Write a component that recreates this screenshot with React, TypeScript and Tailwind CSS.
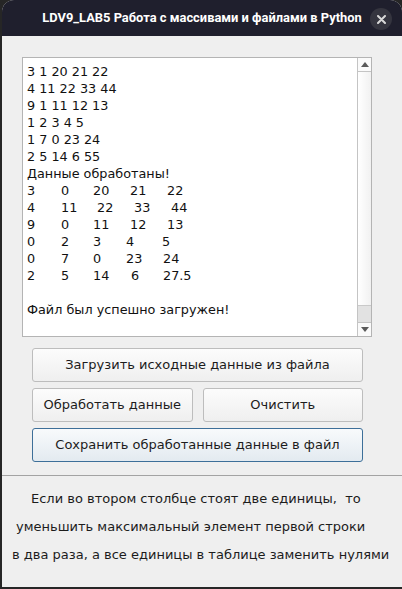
import React from "react";

// строки исходных данных
const rawLines = [
  "3 1 20 21 22",
  "4 11 22 33 44",
  "9 1 11 12 13",
  "1 2 3 4 5",
  "1 7 0 23 24",
  "2 5 14 6 55",
];

// обработанная таблица: [текст, смещение колонки]
const processed: [string, number][][] = [
  [["3", 0], ["0", 34], ["20", 66], ["21", 103], ["22", 140]],
  [["4", 0], ["11", 34], ["22", 70], ["33", 107], ["44", 144]],
  [["9", 0], ["0", 34], ["11", 66], ["12", 103], ["13", 140]],
  [["0", 0], ["2", 34], ["3", 66], ["4", 99], ["5", 135]],
  [["0", 0], ["7", 34], ["0", 66], ["23", 99], ["24", 136]],
  [["2", 0], ["5", 34], ["14", 66], ["6", 104], ["27.5", 136]],
];

const TableRow = ({ cells }: { cells: [string, number][] }) => {
  return (
    <div className="flex h-[17px]">
      {cells.map(([text, x], i) => {
        const next = cells[i + 1];
        const w = next ? next[1] - x : undefined;
        return (
          <span key={i} className="shrink-0" style={w ? { width: w } : undefined}>
            {text}
          </span>
        );
      })}
    </div>
  );
};

const Arrow = ({ up }: { up?: boolean }) => (
  <svg width="8" height="5" viewBox="0 0 8 5">
    {up ? (
      <path d="M0 5 L4 0 L8 5 Z" fill="#5a5a5a" />
    ) : (
      <path d="M0 0 L8 0 L4 5 Z" fill="#5a5a5a" />
    )}
  </svg>
);

const Btn = ({
  children,
  className,
  primary,
}: {
  children: React.ReactNode;
  className?: string;
  primary?: boolean;
}) => (
  <button
    className={
      "h-[34px] rounded-[3px] border text-[13px] text-[#1c1c1c] flex items-center justify-center " +
      (primary
        ? "border-[#3d6f99] bg-gradient-to-b from-[#f8fafc] to-[#e3eaf0] "
        : "border-[#bdbdbd] bg-gradient-to-b from-[#fcfcfc] to-[#efefef] ") +
      (className || "")
    }
  >
    {children}
  </button>
);

const App = () => {
  return (
    <div className="w-[402px] h-[589px] bg-[#262626] pl-[2px] pb-[2px] flex flex-col font-['DejaVu_Sans',sans-serif]">
      <div className="flex-1 flex flex-col rounded-t-[12px] overflow-hidden bg-[#efefef]">
        {/* заголовок окна */}
        <div className="relative h-[36px] shrink-0 bg-[#1f1f2d] flex items-center justify-center">
          <span className="font-['Roboto',sans-serif] font-bold text-[12.9px] text-white">
            LDV9_LAB5 Работа с массивами и файлами в Python
          </span>
          <div className="absolute right-[10px] top-[8px] w-[22px] h-[22px] rounded-full bg-[#35353f] flex items-center justify-center">
            <svg width="9" height="9" viewBox="0 0 9 9">
              <path d="M1 1 L8 8 M8 1 L1 8" stroke="#d8d8d8" strokeWidth="2" strokeLinecap="round" />
            </svg>
          </div>
        </div>

        {/* текстовое поле */}
        <div className="ml-[20px] mt-[21px] w-[350px] h-[280px] border border-[#b4b4b4] bg-white flex text-[12.8px] text-[#111]">
          <div className="flex-1 pl-[4px] pt-[5px] leading-[17px] overflow-hidden">
            {rawLines.map((l, i) => (
              <div key={i} className="h-[17px] whitespace-pre">
                {l}
              </div>
            ))}
            <div className="h-[17px]">Данные обработаны!</div>
            {processed.map((row, i) => (
              <TableRow key={i} cells={row} />
            ))}
            <div className="h-[17px]"></div>
            <div className="h-[17px]">Файл был успешно загружен!</div>
          </div>
          <div className="w-[14px] border-l border-[#c4c4c4] flex flex-col">
            <div className="h-[14px] border-b border-[#c4c4c4] flex items-center justify-center bg-[#fafafa]">
              <Arrow up />
            </div>
            <div className="flex-1 bg-gradient-to-r from-[#ffffff] to-[#f1f1f1]"></div>
            <div className="h-[17px] bg-[#e2e2e2] border-t border-[#c9c9c9]"></div>
            <div className="h-[14px] border-t border-[#c4c4c4] flex items-center justify-center bg-[#fafafa]">
              <Arrow />
            </div>
          </div>
        </div>

        {/* кнопки */}
        <div className="ml-[30px] mt-[11px] w-[331px] flex flex-col gap-[6px]">
          <Btn className="w-full">Загрузить исходные данные из файла</Btn>
          <div className="flex gap-[10px]">
            <Btn className="flex-1">Обработать данные</Btn>
            <Btn className="flex-1">Очистить</Btn>
          </div>
          <Btn primary className="w-full">
            Сохранить обработанные данные в файл
          </Btn>
        </div>

        {/* условие задачи */}
        <div className="mt-[13px] border-t border-[#a3a3a3] pt-[9px] text-[13px] text-[#1c1c1c] leading-[28px]">
          <div className="pl-[29px] whitespace-pre">Если во втором столбце стоят две единицы,  то</div>
          <div className="pl-[14px]">уменьшить максимальный элемент первой строки</div>
          <div className="pl-[10px]">в два раза, а все единицы в таблице заменить нулями</div>
        </div>
      </div>
    </div>
  );
};

export default App;
